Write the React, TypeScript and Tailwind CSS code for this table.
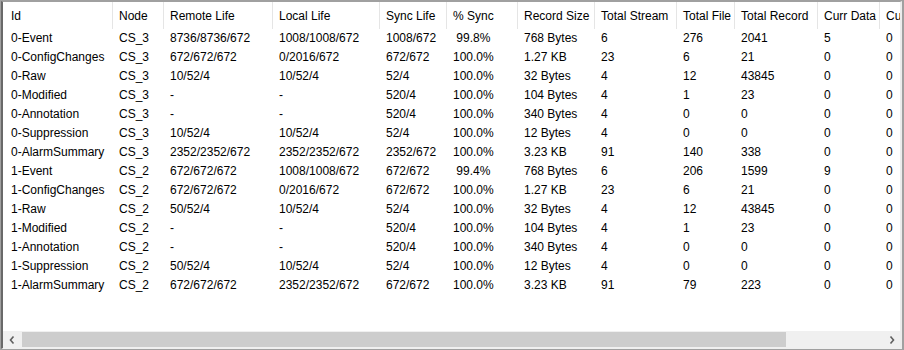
import React from "react";

const cols = [
  { name: "Id", w: 110, first: true },
  { name: "Node", w: 51 },
  { name: "Remote Life", w: 109 },
  { name: "Local Life", w: 107 },
  { name: "Sync Life", w: 67 },
  { name: "% Sync", w: 71 },
  { name: "Record Size", w: 77 },
  { name: "Total Stream", w: 82 },
  { name: "Total File", w: 58 },
  { name: "Total Record", w: 83 },
  { name: "Curr Data", w: 62 },
  { name: "Curr Stream", w: 90 },
];

const rows: string[][] = [
  ["0-Event", "CS_3", "8736/8736/672", "1008/1008/672", "1008/672", " 99.8%", "768 Bytes", "6", "276", "2041", "5", "0"],
  ["0-ConfigChanges", "CS_3", "672/672/672", "0/2016/672", "672/672", "100.0%", "1.27 KB", "23", "6", "21", "0", "0"],
  ["0-Raw", "CS_3", "10/52/4", "10/52/4", "52/4", "100.0%", "32 Bytes", "4", "12", "43845", "0", "0"],
  ["0-Modified", "CS_3", "-", "-", "520/4", "100.0%", "104 Bytes", "4", "1", "23", "0", "0"],
  ["0-Annotation", "CS_3", "-", "-", "520/4", "100.0%", "340 Bytes", "4", "0", "0", "0", "0"],
  ["0-Suppression", "CS_3", "10/52/4", "10/52/4", "52/4", "100.0%", "12 Bytes", "4", "0", "0", "0", "0"],
  ["0-AlarmSummary", "CS_3", "2352/2352/672", "2352/2352/672", "2352/672", "100.0%", "3.23 KB", "91", "140", "338", "0", "0"],
  ["1-Event", "CS_2", "672/672/672", "1008/1008/672", "672/672", " 99.4%", "768 Bytes", "6", "206", "1599", "9", "0"],
  ["1-ConfigChanges", "CS_2", "672/672/672", "0/2016/672", "672/672", "100.0%", "1.27 KB", "23", "6", "21", "0", "0"],
  ["1-Raw", "CS_2", "50/52/4", "10/52/4", "52/4", "100.0%", "32 Bytes", "4", "12", "43845", "0", "0"],
  ["1-Modified", "CS_2", "-", "-", "520/4", "100.0%", "104 Bytes", "4", "1", "23", "0", "0"],
  ["1-Annotation", "CS_2", "-", "-", "520/4", "100.0%", "340 Bytes", "4", "0", "0", "0", "0"],
  ["1-Suppression", "CS_2", "50/52/4", "10/52/4", "52/4", "100.0%", "12 Bytes", "4", "0", "0", "0", "0"],
  ["1-AlarmSummary", "CS_2", "672/672/672", "2352/2352/672", "672/672", "100.0%", "3.23 KB", "91", "79", "223", "0", "0"],
];

export default function App() {
  return (
    <div
      className="w-[904px] h-[350px] bg-white border-t border-l border-r-2 border-b border-[#a0a0a0] text-black text-[12px]"
      style={{ fontFamily: '"Liberation Sans", Arial, sans-serif' }}
    >
      <div className="h-full flex flex-col border-t border-t-[#a0a0a0] border-l-2 border-l-[#696969] border-r-2 border-r-[#ececec] border-b border-b-[#f0f0f0]">
        <div className="flex-1 overflow-hidden flex flex-col">
          {/* header */}
          <div className="flex h-[27px] shrink-0">
            {cols.map((c) => (
              <div
                key={c.name}
                className={`shrink-0 h-full border-r border-[#e5e5e5] whitespace-pre overflow-hidden pt-[2px] leading-[24px] ${c.first ? "pl-[8px]" : "pl-[6px]"}`}
                style={{ width: c.w }}
              >
                {c.name}
              </div>
            ))}
          </div>
          {rows.map((r, i) => (
            <div key={i} className="flex h-[19px] shrink-0">
              {r.map((v, j) => (
                <div
                  key={j}
                  className={`shrink-0 whitespace-pre overflow-hidden leading-[19px] ${j === 0 ? "pl-[8px]" : "pl-[6px]"}`}
                  style={{ width: cols[j].w }}
                >
                  {v}
                </div>
              ))}
            </div>
          ))}
        </div>
        {/* scrollbar */}
        <div className="h-[17px] shrink-0 bg-[#f0f0f0] flex items-center">
          <div className="w-[17px] h-full flex items-center justify-center">
            <svg width="6" height="8" viewBox="0 0 6 8">
              <polyline points="4.5,0.5 1.5,4 4.5,7.5" fill="none" stroke="#606060" strokeWidth="1.6" />
            </svg>
          </div>
          <div className="flex-1 h-full py-[1px] pl-[2px] pr-[97px]">
            <div className="h-full bg-[#cdcdcd]" />
          </div>
          <div className="w-[17px] h-full flex items-center justify-center">
            <svg width="6" height="8" viewBox="0 0 6 8">
              <polyline points="1.5,0.5 4.5,4 1.5,7.5" fill="none" stroke="#606060" strokeWidth="1.6" />
            </svg>
          </div>
        </div>
      </div>
    </div>
  );
}
